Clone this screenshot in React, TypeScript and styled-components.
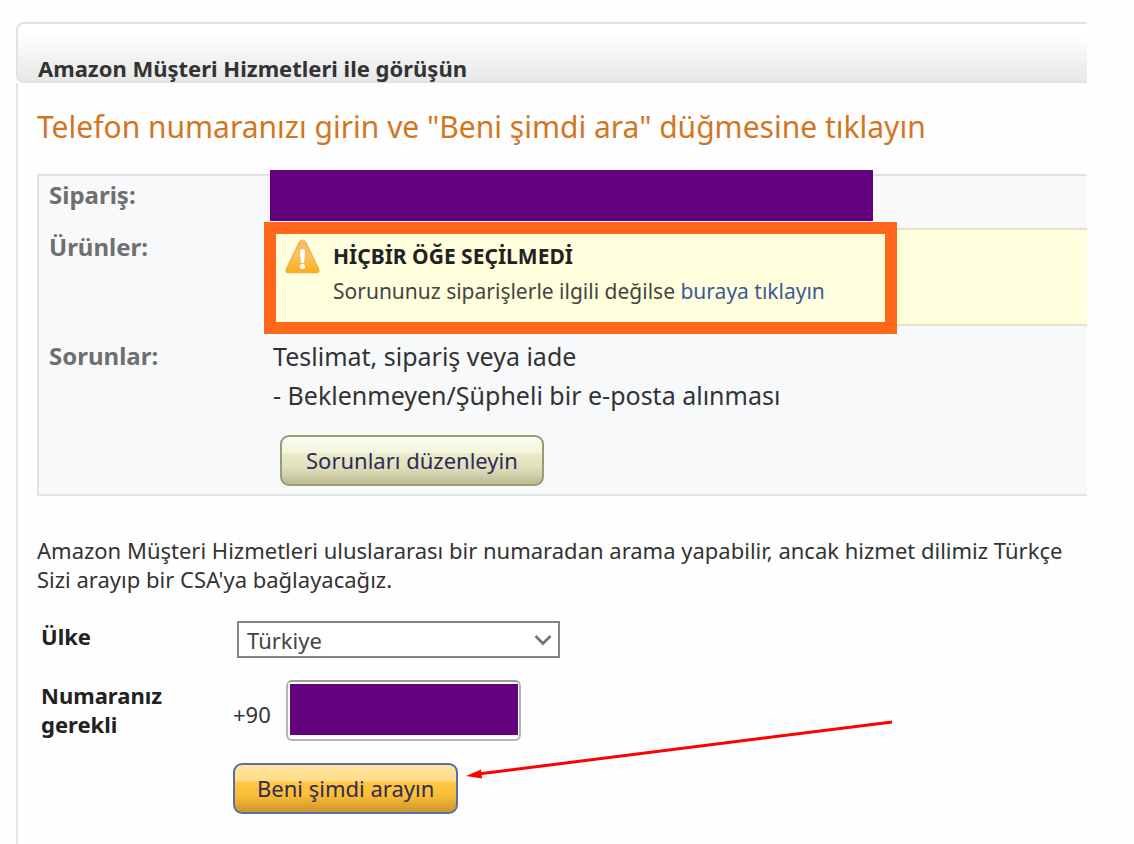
import React from 'react';
import styled, { createGlobalStyle } from 'styled-components';

const GlobalStyle = createGlobalStyle`
  *, *::before, *::after { box-sizing: border-box; }
  body { margin: 0; background: #fefefe; }
  body, button, select, input { font-family: 'Noto Sans', 'Open Sans', sans-serif; }
`;

const Page = styled.div`
  display: flex;
  flex-direction: column;
  min-height: 100vh;
  padding: 22px 47px 0 16px;
  color: #333;
  font-size: 22px;
  line-height: 29px;
  overflow: hidden;
`;

const TitleBar = styled.header`
  display: flex;
  align-items: flex-end;
  height: 61px;
  padding-left: 20px;
  border: 2px solid #e2e2e2;
  border-right: 0;
  border-radius: 8px 0 0 8px;
  background: linear-gradient(#fff 15%, #e8e8e8);
`;

const Title = styled.h1`
  margin: 0;
  font-size: 22px;
  font-weight: 700;
  line-height: 26px;
  white-space: nowrap;
`;

const Body = styled.main`
  flex: 1;
  padding: 24px 0 28px 19px;
  border-left: 2px solid #e5e5e5;
`;

const Heading = styled.h2`
  margin: 0 0 27px;
  color: #d27622;
  font-size: 30px;
  font-weight: 400;
  line-height: 40px;
  white-space: nowrap;
`;

const Summary = styled.dl`
  display: grid;
  grid-template-columns: 225px 1fr;
  margin: 0 0 40px;
  padding-bottom: 8px;
  border: 2px solid #e1e3e4;
  border-right: 0;
  background: #f7f9fb;
`;

const Term = styled.dt`
  padding: 4px 0 0 10px;
  color: #6f6f6f;
  font-size: 24px;
  font-weight: 700;
  line-height: 30px;
`;

const OrderCell = styled.dd`
  position: relative;
  height: 52px;
  margin: 0;
`;

const OrderMask = styled.span`
  position: absolute;
  top: -6px;
  left: 6px;
  width: 603px;
  height: 51px;
  background: #62007e;
`;

const ProductsCell = styled.dd`
  position: relative;
  margin: 0 0 11px;
`;

const Notice = styled.div`
  display: flex;
  gap: 13px;
  height: 98px;
  padding: 9px 0 0 21px;
  border: 2px solid #e3e3c9;
  border-width: 2px 0;
  background: #ffffdd;
  color: #444;
  white-space: nowrap;
`;

const NoticeText = styled.div`
  font-size: 21px;
  line-height: 35px;
`;

const NoticeTitle = styled.strong`
  display: block;
  color: #222;
`;

const NoticeLink = styled.a`
  color: #3b5a97;
  text-decoration: none;
`;

const Highlight = styled.span`
  position: absolute;
  top: -6px;
  left: 0;
  width: 633px;
  height: 112px;
  border: 12px solid #ff671b;
  pointer-events: none;
`;

const IssuesCell = styled.dd`
  margin: 0;
  padding-left: 9px;
  font-size: 25px;
  line-height: 39px;
`;

const Button = styled.button<{ $primary?: boolean }>`
  height: 51px;
  padding: 0 22px 2px;
  border: 2px solid ${p => (p.$primary ? '#5470a6' : '#9b9b70')};
  border-radius: 9px;
  background: ${p =>
    p.$primary
      ? 'linear-gradient(#ffe3a0, #ffdc8a 34%, #ffc843 36%, #fabd37 65%, #cb9629)'
      : 'linear-gradient(#fbfbf2, #f3f4dd 34%, #eaebc8 36%, #dfe0bd 65%, #bbbc94)'};
  color: #2f2a5a;
  font-size: 22px;
  line-height: 30px;
  white-space: nowrap;
`;

const EditButton = styled(Button)`
  display: block;
  margin: 20px 0 0 7px;
  padding: 0 24px 2px;
`;

const Info = styled.p`
  margin: 0 0 27px;
  white-space: nowrap;
`;

const Form = styled.form`
  display: grid;
  grid-template-columns: 196px 1fr;
`;

const Label = styled.label`
  padding: 1px 0 0 4px;
  color: #222;
  font-weight: 700;
`;

const CountryField = styled.div`
  position: relative;
  width: 323px;
  height: 59px;
  margin-left: 4px;
`;

const Country = styled.select`
  width: 100%;
  height: 37px;
  padding: 0 8px;
  border: 2px solid #858585;
  border-radius: 0;
  appearance: none;
  background: #fff;
  color: #444;
  font-size: 22px;
`;

const Chevron = styled.svg`
  position: absolute;
  top: 12px;
  right: 8px;
  pointer-events: none;
`;

const PhoneField = styled.div`
  display: flex;
  align-items: center;
  gap: 15px;
  margin-bottom: 22px;
`;

const Prefix = styled.span`
  padding-top: 7px;
`;

const PhoneBox = styled.span`
  position: relative;
  display: block;
  width: 235px;
`;

const Phone = styled.input`
  display: block;
  width: 100%;
  height: 61px;
  border: 2px solid #b5b5b5;
  border-top-color: #9b9b9b;
  border-radius: 6px;
  background: #fff;
  font-size: 22px;
`;

const PhoneMask = styled.span`
  position: absolute;
  inset: 4px 3px 6px 4px;
  background: #62007e;
  pointer-events: none;
`;

const Submit = styled.div`
  position: relative;
  grid-column: 2;
  justify-self: start;
`;

const Arrow = styled.svg`
  position: absolute;
  bottom: 30px;
  left: 100%;
  pointer-events: none;
`;

const WarningIcon = () => (
  <svg width="35" height="35" viewBox="0 0 35 35" aria-hidden="true">
    <defs>
      <linearGradient id="warn" x1="0" y1="0" x2="0" y2="1">
        <stop offset="0" stopColor="#f9b85a" />
        <stop offset="0.5" stopColor="#fcc15f" />
        <stop offset="1" stopColor="#fbae17" />
      </linearGradient>
    </defs>
    <path
      d="M17.5 1.2c-1.6 0-2.6.8-3.4 2.2L1.4 29.8C.3 32.3 1 33.8 3.4 33.8h28.2c2.4 0 3.1-1.5 2-4L20.9 3.4c-.8-1.4-1.8-2.2-3.4-2.2z"
      fill="url(#warn)"
      stroke="#eda24a"
    />
    <path d="M15 12.5c0-1.6 1-2.5 2.5-2.5s2.5.9 2.5 2.5l-1 11.500h-3z" fill="#fff" />
    <circle cx="17.5" cy="27.5" r="2.6" fill="#fff" />
  </svg>
);

export default function App() {
  return (
    <>
      <GlobalStyle />
      <Page>
        <TitleBar>
          <Title>Amazon Müşteri Hizmetleri ile görüşün</Title>
        </TitleBar>
        <Body>
          <Heading>Telefon numaranızı girin ve "Beni şimdi ara" düğmesine tıklayın</Heading>
          <Summary>
            <Term>Sipariş:</Term>
            <OrderCell>
              <OrderMask />
            </OrderCell>
            <Term>Ürünler:</Term>
            <ProductsCell>
              <Notice>
                <WarningIcon />
                <NoticeText>
                  <NoticeTitle>HİÇBİR ÖĞE SEÇİLMEDİ</NoticeTitle>
                  Sorununuz siparişlerle ilgili değilse <NoticeLink href="#">buraya tıklayın</NoticeLink>
                </NoticeText>
              </Notice>
              <Highlight />
            </ProductsCell>
            <Term>Sorunlar:</Term>
            <IssuesCell>
              <div>Teslimat, sipariş veya iade</div>
              <div>- Beklenmeyen/Şüpheli bir e-posta alınması</div>
              <EditButton type="button">Sorunları düzenleyin</EditButton>
            </IssuesCell>
          </Summary>
          <Info>
            Amazon Müşteri Hizmetleri uluslararası bir numaradan arama yapabilir, ancak hizmet dilimiz Türkçe
            <br />
            Sizi arayıp bir CSA'ya bağlayacağız.
          </Info>
          <Form onSubmit={e => e.preventDefault()}>
            <Label htmlFor="country">Ülke</Label>
            <CountryField>
              <Country id="country" defaultValue="tr">
                <option value="tr">Türkiye</option>
              </Country>
              <Chevron width="18" height="14" viewBox="0 0 18 14" aria-hidden="true">
                <path d="M1.5 3L9 10.5 16.5 3" fill="none" stroke="#777" strokeWidth="2.8" />
              </Chevron>
            </CountryField>
            <Label htmlFor="phone">
              Numaranız
              <br />
              gerekli
            </Label>
            <PhoneField>
              <Prefix>+90</Prefix>
              <PhoneBox>
                <Phone id="phone" type="tel" />
                <PhoneMask />
              </PhoneBox>
            </PhoneField>
            <Submit>
              <Button type="submit" $primary>
                Beni şimdi arayın
              </Button>
              <Arrow width="436" height="65" viewBox="0 0 436 65" aria-hidden="true">
                <path d="M20 55L434 3" stroke="#f00" strokeWidth="3" />
                <path d="M8 57L23 50.5L24 59.5z" fill="#f00" />
              </Arrow>
            </Submit>
          </Form>
        </Body>
      </Page>
    </>
  );
}
